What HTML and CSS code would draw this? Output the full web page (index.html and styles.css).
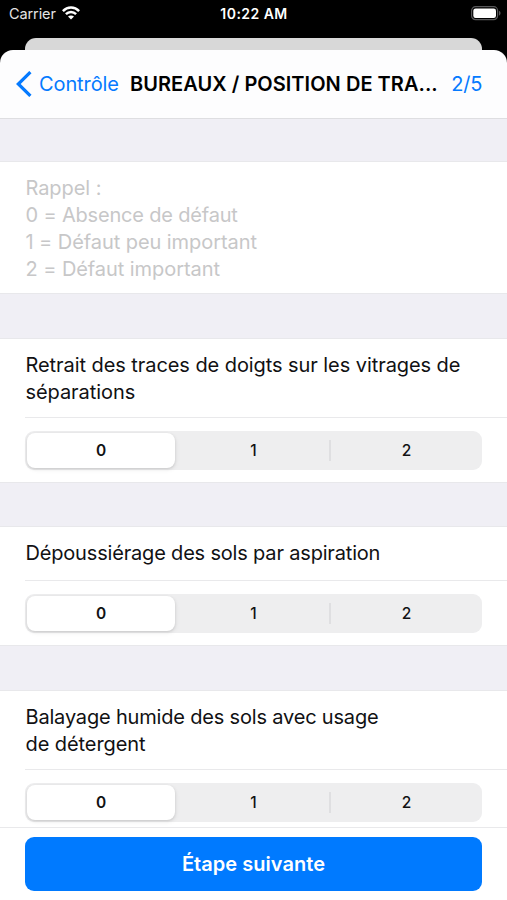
FILE: index.html
```html
<!DOCTYPE html>
<html lang="fr">
<head>
<meta charset="utf-8">
<title>Contrôle</title>
<link rel="stylesheet" href="styles.css">
</head>
<body>
<header class="status">
  <div class="carrier"><span>Carrier</span>
    <svg class="wifi" width="18" height="14" viewBox="0 0 18 14" fill="none" stroke="#fff" stroke-width="2.5"><path d="M.9 5.1C5.5.4 12.5.4 17.1 5.1M3.9 8.2c2.9-2.9 7.3-2.9 10.2 0"/><path d="M9 13.5 6 10.5c1.6-1.5 4.4-1.5 6 0Z" fill="#fff" stroke="none"/></svg>
  </div>
  <div class="time">10:22 AM</div>
  <svg class="battery" width="30" height="15" viewBox="0 0 30 15"><rect x=".6" y=".7" width="26" height="13" rx="4" fill="none" stroke="#58585a" stroke-width="1.2"/><rect x="2.3" y="2.4" width="22.7" height="9.6" rx="2.3" fill="#fff"/><path d="M28 4.8c2 .8 2 4 0 4.8Z" fill="#58585a"/></svg>
</header>
<div class="back-sheet"></div>
<main class="sheet">
  <nav class="nav">
    <a class="back"><svg width="16" height="26" viewBox="0 0 16 26" fill="none" stroke="#057aff" stroke-width="3.2"><path d="M14.4 1.1 2.3 13l12.1 11.9"/></svg><span class="back-label">Contrôle</span></a>
    <h1 class="title">BUREAUX / POSITION DE TRA...</h1>
    <span class="step">2/5</span>
  </nav>
  <div class="list">
    <section class="group reminder">
      <p>Rappel :</p><p class="tight">0 = Absence de défaut</p><p>1 = Défaut peu important</p><p>2 = Défaut important</p>
    </section>
    <section class="group">
      <div class="question two-lines">Retrait des traces de doigts sur les vitrages de<br>séparations</div>
      <div class="answer"><div class="segments"><span class="seg selected">0</span><span class="seg">1</span><span class="seg divided">2</span></div></div>
    </section>
    <section class="group">
      <div class="question one-line"><span class="tight">Dépoussiérage des sols par aspiration</span></div>
      <div class="answer"><div class="segments"><span class="seg selected">0</span><span class="seg">1</span><span class="seg divided">2</span></div></div>
    </section>
    <section class="group">
      <div class="question two-lines"><span class="tight">Balayage humide des sols avec usage</span><br>de détergent</div>
      <div class="answer"><div class="segments"><span class="seg selected">0</span><span class="seg">1</span><span class="seg divided">2</span></div></div>
    </section>
  </div>
  <footer class="footer"><button class="next"><span>Étape suivante</span></button></footer>
</main>
</body>
</html>
```
FILE: styles.css
```css
* { box-sizing: border-box; }
body {
  margin: 0;
  height: 900px;
  overflow: hidden;
  display: flex;
  flex-direction: column;
  background: #000;
  color: #111113;
  font-family: Inter, "Liberation Sans", sans-serif;
}
.status {
  height: 38px;
  flex: none;
  display: grid;
  grid-template-columns: 1fr auto 1fr;
  align-items: start;
  padding: 4px 6px 0 9px;
  color: #fff;
  font-size: 14.5px;
  line-height: 20px;
}
.carrier { display: flex; gap: 6px; color: #e4e4e4; letter-spacing: -.1px; }
.wifi { margin-top: 2px; }
.time { font-weight: 600; font-size: 14px; letter-spacing: .45px; margin-right: 2px; }
.battery { justify-self: end; margin-top: 2px; }
.back-sheet {
  height: 12px;
  flex: none;
  margin: 0 25px;
  background: #d8d8d8;
  border-radius: 11px 11px 0 0;
}
.sheet {
  flex: 1;
  min-height: 0;
  display: flex;
  flex-direction: column;
  background: #fdfdfe;
  border-radius: 13px 13px 0 0;
  overflow: hidden;
}
.nav {
  height: 69px;
  flex: none;
  display: flex;
  align-items: center;
  padding: 0 25px 0 16px;
  border-bottom: 1px solid #dedee1;
  font-size: 20px;
  white-space: nowrap;
}
.back { display: flex; align-items: center; gap: 7px; width: 114px; color: #057aff; }
.back-label { letter-spacing: -.1px; }
.title { margin: 0; font-size: 20px; font-weight: 600; letter-spacing: .04px; color: #000; }
.step { margin-left: auto; color: #057aff; letter-spacing: -.3px; }
.list {
  flex: 1;
  min-height: 0;
  overflow: hidden;
  display: flex;
  flex-direction: column;
  gap: 43.5px;
  padding-top: 42px;
  background: #f0eff5;
}
.group {
  flex: none;
  background: #fff;
  border-top: 1px solid #e8e8eb;
  border-bottom: 1px solid #e8e8eb;
  font-size: 20px;
  line-height: 27px;
  letter-spacing: -.07px;
}
.reminder { padding: 13px 25.5px 10px; color: #c7c7c8; }
.reminder p { margin: 0; }
.tight, .reminder .tight { letter-spacing: -.18px; }
.question {
  margin-left: 25px;
  padding: 13px 0 0 .5px;
  border-bottom: 1px solid #e9e9eb;
  white-space: nowrap;
}
.two-lines { height: 79px; }
.one-line { height: 54px; }
.answer { padding: 13px 25px 12px; }
.segments {
  height: 39px;
  display: grid;
  grid-template-columns: repeat(3, 1fr);
  padding: 2px;
  background: #eeeeef;
  border-radius: 9px;
}
.seg {
  display: flex;
  align-items: center;
  justify-content: center;
  position: relative;
  font-size: 15.5px;
  font-weight: 500;
}
.selected {
  margin-right: 3px;
  background: #fff;
  border-radius: 8px;
  font-weight: 600;
  box-shadow: 0 1px 3px rgba(0, 0, 0, .13), 1px 2px 5px rgba(0, 0, 0, .05);
}
.divided { padding-left: 4px; }
.divided::before {
  content: "";
  position: absolute;
  left: 0;
  top: 7px;
  bottom: 7px;
  width: 1.5px;
  background: #dfdfe1;
}
.footer {
  flex: none;
  height: 73px;
  padding: 8.5px 25px 0;
  background: #fff;
  border-top: 1px solid #e9e9eb;
}
.next {
  display: block;
  width: 100%;
  height: 54px;
  border: 0;
  border-radius: 9px;
  background: #007aff;
  color: #fff;
  font: 600 20px Inter, "Liberation Sans", sans-serif;
  letter-spacing: .04px;
}
```
